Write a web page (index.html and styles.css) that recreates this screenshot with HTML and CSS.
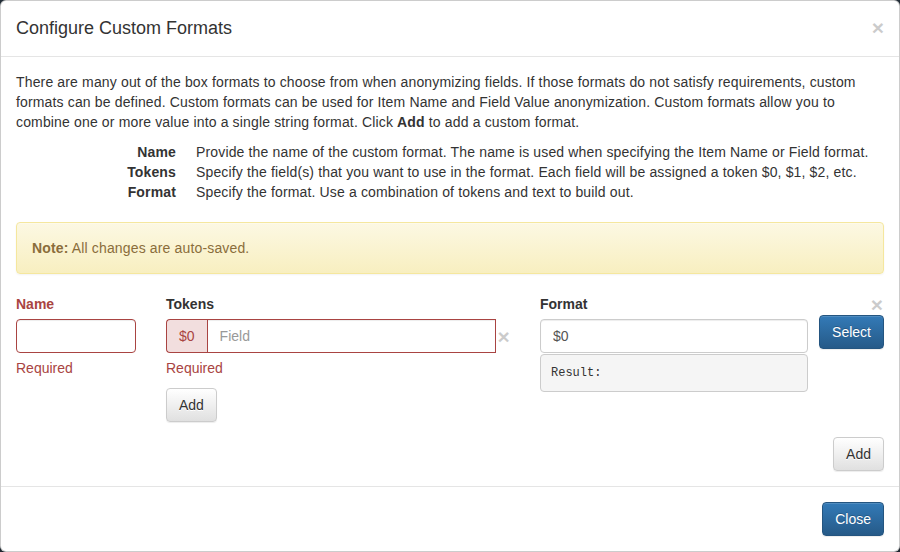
FILE: index.html
```html
<!DOCTYPE html>
<html lang="en">
<head>
<meta charset="utf-8">
<title>Configure Custom Formats</title>
<link rel="stylesheet" href="styles.css">
</head>
<body>
<div class="modal">
  <div class="modal-header">
    <h4 class="modal-title">Configure Custom Formats</h4>
    <button class="close" type="button">&times;</button>
  </div>
  <div class="modal-body">
    <p class="intro">There are many out of the box formats to choose from when anonymizing fields. If those formats do not satisfy requirements, custom formats can be defined. Custom formats can be used for Item Name and Field Value anonymization. Custom formats allow you to combine one or more value into a single string format. Click <b>Add</b> to add a custom format.</p>
    <dl class="dl-horizontal">
      <dt>Name</dt><dd>Provide the name of the custom format. The name is used when specifying the Item Name or Field format.</dd>
      <dt>Tokens</dt><dd>Specify the field(s) that you want to use in the format. Each field will be assigned a token $0, $1, $2, etc.</dd>
      <dt>Format</dt><dd>Specify the format. Use a combination of tokens and text to build out.</dd>
    </dl>
    <div class="alert"><b>Note:</b> All changes are auto-saved.</div>

    <div class="format-row">
      <div class="col-name has-error">
        <label class="control-label">Name</label>
        <input class="form-control" type="text">
        <span class="help-block">Required</span>
      </div>
      <div class="col-tokens">
        <label class="control-label">Tokens</label>
        <div class="token-row">
          <div class="input-group has-error">
            <span class="input-addon">$0</span>
            <input class="form-control token-input" type="text" placeholder="Field">
          </div>
          <button class="close small-close" type="button">&times;</button>
        </div>
        <span class="help-block error-text">Required</span>
        <button class="btn btn-default" type="button">Add</button>
      </div>
      <div class="col-format">
        <div class="format-main">
          <label class="control-label">Format</label>
          <input class="form-control" type="text" value="$0">
          <pre class="result">Result:</pre>
        </div>
        <div class="format-side">
          <button class="close" type="button">&times;</button>
          <button class="btn btn-primary" type="button">Select</button>
        </div>
      </div>
    </div>

    <div class="actions">
      <button class="btn btn-default" type="button">Add</button>
    </div>
  </div>
  <div class="modal-footer">
    <button class="btn btn-primary" type="button">Close</button>
  </div>
</div>
</body>
</html>
```

FILE: styles.css
```css
* { box-sizing: border-box; }

html, body {
  margin: 0;
  padding: 0;
}

body {
  background: #26313c;
  font-family: "Liberation Sans", Arial, sans-serif;
  font-size: 14px;
  line-height: 20px;
  color: #333;
  width: 900px;
  height: 552px;
  overflow: hidden;
}

.modal {
  width: 900px;
  background: #fff;
  border: 1px solid rgba(0, 0, 0, 0.2);
  border-radius: 6px;
  box-shadow: 0 5px 15px rgba(0, 0, 0, 0.5);
}

.modal-header {
  display: flex;
  align-items: flex-start;
  justify-content: space-between;
  padding: 15px;
  border-bottom: 1px solid #e5e5e5;
}

.modal-title {
  margin: 0;
  font-size: 18px;
  font-weight: 500;
  line-height: 25px;
  color: #333;
}

.close {
  background: none;
  border: 0;
  padding: 0;
  font-family: "Liberation Sans", Arial, sans-serif;
  font-size: 21px;
  font-weight: bold;
  line-height: 1;
  color: #000;
  opacity: 0.2;
  text-shadow: 0 1px 0 #fff;
  cursor: pointer;
}

.modal-header .close {
  margin-top: 1px;
}

.modal-body {
  padding: 15px;
}

.intro,
.dl-horizontal,
.alert {
  letter-spacing: 0.15px;
}

.intro {
  margin: 0 0 10px;
}

.dl-horizontal {
  display: grid;
  grid-template-columns: 160px 1fr;
  column-gap: 20px;
  margin: 0 0 20px;
}

.dl-horizontal dt {
  font-weight: bold;
  text-align: right;
}

.dl-horizontal dd {
  margin: 0;
}

.alert {
  padding: 15px;
  margin-bottom: 20px;
  border: 1px solid #f5e79e;
  border-radius: 4px;
  color: #8a6d3b;
  background: linear-gradient(to bottom, #fcf8e3 0, #f8efc0 100%);
  box-shadow: inset 0 1px 0 rgba(255, 255, 255, 0.25), 0 1px 2px rgba(0, 0, 0, 0.05);
}

.format-row {
  display: flex;
  gap: 30px;
}

.col-name {
  width: 120px;
  display: flex;
  flex-direction: column;
}

.col-tokens {
  width: 344px;
  display: flex;
  flex-direction: column;
  align-items: flex-start;
}

.col-format {
  flex: 1;
  display: flex;
}

.control-label {
  display: block;
  font-weight: bold;
  margin-bottom: 5px;
}

.has-error .control-label {
  color: #a94442;
}

.form-control {
  display: block;
  width: 100%;
  height: 34px;
  padding: 6px 12px;
  font-family: "Liberation Sans", Arial, sans-serif;
  font-size: 14px;
  line-height: 20px;
  color: #555;
  background: #fff;
  border: 1px solid #ccc;
  border-radius: 4px;
  box-shadow: inset 0 1px 1px rgba(0, 0, 0, 0.075);
}

.form-control::placeholder {
  color: #999;
}

.has-error .form-control {
  border-color: #a94442;
}

.help-block {
  display: block;
  margin: 5px 0 10px;
}

.has-error .help-block,
.error-text {
  color: #a94442;
}

.token-row {
  display: flex;
  align-items: center;
  width: 100%;
}

.input-group {
  display: flex;
  width: 331px;
}

.input-addon {
  display: flex;
  align-items: center;
  padding: 6px 12px;
  color: #a94442;
  background: #f2dede;
  border: 1px solid #a94442;
  border-right: 0;
  border-radius: 4px 0 0 4px;
}

.token-input {
  flex: 1;
  border-radius: 0;
}

.small-close {
  width: 13px;
  text-align: center;
  margin-left: 1px;
}

.btn {
  display: inline-block;
  height: 34px;
  padding: 6px 12px;
  font-family: "Liberation Sans", Arial, sans-serif;
  font-size: 14px;
  line-height: 20px;
  border: 1px solid transparent;
  border-radius: 4px;
  cursor: pointer;
}

.btn-default {
  color: #333;
  border-color: #ccc;
  background: linear-gradient(to bottom, #fff 0, #e0e0e0 100%);
  text-shadow: 0 1px 0 #fff;
  box-shadow: inset 0 1px 0 rgba(255, 255, 255, 0.15), 0 1px 1px rgba(0, 0, 0, 0.075);
}

.btn-primary {
  color: #fff;
  border-color: #245580;
  background: linear-gradient(to bottom, #337ab7 0, #265a88 100%);
  text-shadow: 0 -1px 0 rgba(0, 0, 0, 0.2);
  box-shadow: inset 0 1px 0 rgba(255, 255, 255, 0.15), 0 1px 1px rgba(0, 0, 0, 0.075);
}

.format-main {
  width: 268px;
}

.result {
  margin: 1px 0 0;
  padding: 9px 10px;
  font-family: "Liberation Mono", "DejaVu Sans Mono", monospace;
  font-size: 12px;
  line-height: 18px;
  color: #333;
  background: #f5f5f5;
  border: 1px solid #ccc;
  border-radius: 4px;
}

.format-side {
  margin-left: auto;
  display: flex;
  flex-direction: column;
  align-items: flex-end;
}

.format-side .close {
  height: 21px;
  margin-right: 1px;
}

.actions {
  display: flex;
  justify-content: flex-end;
  margin-top: 15px;
}

.modal-footer {
  display: flex;
  justify-content: flex-end;
  padding: 15px;
  border-top: 1px solid #e5e5e5;
}
```
